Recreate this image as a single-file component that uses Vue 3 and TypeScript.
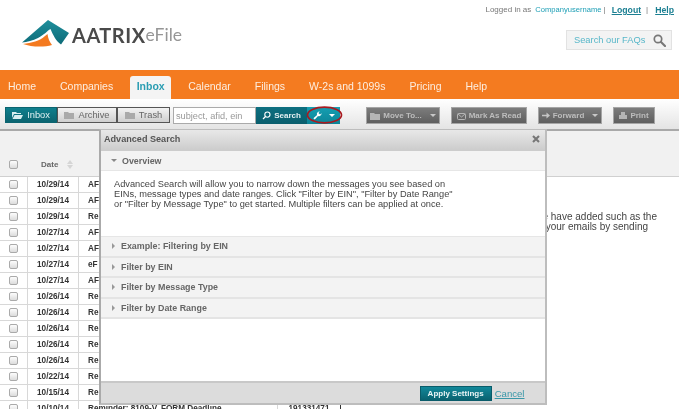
<script setup lang="ts">
const navItems: string[] = ['Home', 'Companies', 'Inbox', 'Calendar', 'Filings', 'W-2s and 1099s', 'Pricing', 'Help']
interface Row { date: string; subject: string; ein: string }
const rows: Row[] = [
  ['10/29/14', 'AF'], ['10/29/14', 'AF'], ['10/29/14', 'Re'], ['10/27/14', 'AF'], ['10/27/14', 'AF'],
  ['10/27/14', 'eF'], ['10/27/14', 'AF'], ['10/26/14', 'Re'], ['10/26/14', 'Re'],
  ['10/26/14', 'Re'], ['10/26/14', 'Re'], ['10/26/14', 'Re'], ['10/22/14', 'Re'], ['10/15/14', 'Re'],
].map(([date, subject]) => ({ date, subject, ein: '' }))
rows.push({ date: '10/10/14', subject: 'Reminder: 8109-V, FORM Deadline', ein: '191331471' })
const sections: string[] = ['Example: Filtering by EIN', 'Filter by EIN', 'Filter by Message Type', 'Filter by Date Range']
</script>

<template>
  <div class="page">
    <header class="top">
      <div class="logo">
        <svg width="50" height="30" viewBox="20 18 50 30">
          <defs>
            <linearGradient id="tealg" x1="0" y1="0" x2="0" y2="1">
              <stop offset="0" stop-color="#1f8f9c" />
              <stop offset="1" stop-color="#0d6b78" />
            </linearGradient>
          </defs>
          <path d="M22 42.5 L48 20 L69 33 L61 44.5 C56 41 53 35 50.5 29 C47 31 44 35 38 38 C33 40.5 27 42 22 42.5 Z" fill="url(#tealg)" />
          <path d="M23 44 C31 43 40 41 45 36 L47.5 34 C48 38 49.5 42 52 45 C44 47.5 31 47 23 44 Z" fill="#f47a20" />
        </svg>
        <span class="brand">AATRIX</span><span class="efile">eFile</span>
      </div>
      <div class="top-right">
        <div class="user">
          <span class="muted">Logged in as</span>
          <span class="uname">Companyusername</span>
          <span class="muted sep1">|</span>
          <a class="tlink">Logout</a>
          <span class="muted sep2">|</span>
          <a class="tlink">Help</a>
        </div>
        <div class="faq">
          <span>Search our FAQs</span>
          <svg width="13" height="13" viewBox="0 0 13 13"><circle cx="5" cy="5" r="3.7" fill="none" stroke="#777" stroke-width="1.7" /><path d="M8 8 L12 12" stroke="#777" stroke-width="2.2" stroke-linecap="round" /></svg>
        </div>
      </div>
    </header>

    <nav class="nav">
      <a v-for="n in navItems" :key="n" :class="['nav-item', { active: n === 'Inbox' }]">{{ n }}</a>
    </nav>

    <div class="toolbar">
      <div class="tabs">
        <button class="tab on">
          <svg width="11" height="8" viewBox="0 0 11 8"><path d="M0 1h4l1 1h4v1H2L0 7z M2.5 4H11L9 8H0.5z" fill="#d8eef0" /></svg>Inbox
        </button>
        <button class="tab">
          <svg width="10" height="8" viewBox="0 0 10 8"><path d="M0 1h4l1 1h5v6H0z" fill="#aaa" /></svg>Archive
        </button>
        <button class="tab">
          <svg width="10" height="8" viewBox="0 0 10 8"><path d="M0 1h4l1 1h5v6H0z" fill="#aaa" /></svg>Trash
        </button>
      </div>
      <div class="search">
        <input class="sinput" placeholder="subject, afid, ein" />
        <button class="sbtn">
          <svg width="9" height="9" viewBox="0 0 9 9"><circle cx="5.4" cy="3.6" r="2.6" fill="none" stroke="#fff" stroke-width="1.1" /><path d="M3.5 5.5 L1 8" stroke="#fff" stroke-width="1.3" /></svg>Search
        </button>
        <button class="wbtn">
          <svg width="9" height="9" viewBox="0 0 9 9"><path d="M8.6 2.2 A2.6 2.6 0 0 1 5 4.9 L1.8 8.6 L0.4 7.2 L4.1 4 A2.6 2.6 0 0 1 6.8 0.4 L5.4 1.9 L7.1 3.6 Z" fill="#fff" /></svg>
          <i class="caret white"></i>
          <svg class="ring" width="37" height="20" viewBox="0 0 37 20"><ellipse cx="18.5" cy="10" rx="17" ry="7.8" fill="none" stroke="#a81a20" stroke-width="1.7" /></svg>
        </button>
      </div>
      <div class="actions">
        <button class="act w74">
          <svg width="10" height="8" viewBox="0 0 10 8"><path d="M0 1h4l1 1h5v6H0z" fill="#b5b5b5" /></svg>Move To...<i class="caret"></i>
        </button>
        <button class="act w76">
          <svg width="9" height="8" viewBox="0 0 9 8"><rect x=".5" y="1.5" width="8" height="6" rx="1" fill="none" stroke="#b5b5b5" /><path d="M1 2 L4.5 5 L8 2" fill="none" stroke="#b5b5b5" /></svg>Mark As Read
        </button>
        <button class="act w64">
          <svg width="8" height="7" viewBox="0 0 8 7"><path d="M0 2.7h4.5V.5L8 3.5 4.5 6.5V4.3H0z" fill="#c5c5c5" /></svg>Forward<i class="caret"></i>
        </button>
        <button class="act w42">
          <svg width="8" height="8" viewBox="0 0 8 8"><path d="M2 0h4v3H2z M0 3h8v4H0z" fill="#b5b5b5" /></svg>Print
        </button>
      </div>
    </div>

    <main class="content">
      <section class="list">
        <div class="list-head">
          <span class="c-check"><i class="box"></i></span>
          <span class="h-date">Date</span>
          <span class="sort"><i class="up"></i><i class="down"></i></span>
        </div>
        <div v-for="(r, i) in rows" :key="i" class="row">
          <span class="c-check"><i class="box"></i></span>
          <span class="c-date">{{ r.date }}</span>
          <span class="c-subj">{{ r.subject }}</span>
          <span class="c-ein">{{ r.ein }}</span>
        </div>
      </section>
      <section class="detail">
        <div class="detail-head"></div>
        <div class="detail-body">
          <p>We have added such as the</p>
          <p class="line2">about your emails by sending</p>
        </div>
      </section>
    </main>

    <div class="modal">
      <div class="m-title">
        <span>Advanced Search</span>
        <svg width="8" height="8" viewBox="0 0 8 8"><path d="M1 1 L7 7 M7 1 L1 7" stroke="#777" stroke-width="2.1" /></svg>
      </div>
      <div class="m-head"><i class="tri-down"></i>Overview</div>
      <div class="m-body">
        Advanced Search will allow you to narrow down the messages you see based on<br />
        EINs, message types and date ranges. Click "Filter by EIN", "Filter by Date Range"<br />
        or "Filter by Message Type" to get started. Multiple filters can be applied at once.
      </div>
      <div v-for="s in sections" :key="s" class="m-head closed"><i class="tri-right"></i>{{ s }}</div>
      <div class="m-space"></div>
      <div class="m-foot">
        <button class="apply">Apply Settings</button>
        <a class="cancel">Cancel</a>
      </div>
    </div>
  </div>
</template>

<style>
html, body { margin: 0; background: #fff; }
</style>

<style scoped>
.page {
  position: relative;
  width: 679px;
  height: 409px;
  overflow: hidden;
  background: #fff;
  font-family: "Liberation Sans", Arial, sans-serif;
  color: #444;
  filter: blur(0.35px);
}
button { font-family: inherit; padding: 0; cursor: pointer; }
.top { height: 70px; display: flex; justify-content: space-between; }
.logo { display: flex; align-items: flex-start; padding: 18px 0 0 20px; }
.brand { font: 700 20px/1 Lato, sans-serif; color: #4a4a4a; letter-spacing: 0.5px; margin: 7px 0 0 2px; }
.efile { font: 400 17.5px/20px Lato, sans-serif; color: #969696; margin: 7px 0 0 0; }
.top-right { display: flex; flex-direction: column; align-items: flex-end; padding: 5px 5px 0 0; }
.user { font-size: 8px; line-height: 10px; display: flex; align-items: center; }
.muted { color: #777; }
.uname { color: #1c9eb5; margin-left: 4px; font-size: 7.6px; font-weight: 400; }
.sep1 { margin-left: 2px; }
.sep2 { margin: 0 7px 0 5px; }
.tlink { color: #1b7f92; font-weight: 700; text-decoration: underline; font-size: 8.7px; margin-left: 6px; }
.sep2 + .tlink { margin-left: 0; }
.faq {
  box-sizing: border-box;
  width: 106px; height: 20px; margin: 15px 2px 0 0;
  background: #f3f3f3; border: 1px solid #e2e2e2;
  display: flex; align-items: center; justify-content: space-between;
  padding: 0 5px 0 7px;
  color: #57b7c9; font-size: 9.3px;
}
.nav { height: 29px; background: #f47b20; display: flex; align-items: flex-end; }
.nav-item {
  height: 23px; line-height: 20px; padding: 0 12px;
  color: #fdeee0; font-size: 10.5px; border-radius: 3px 3px 0 0;
}
.nav-item:first-child { padding-left: 8px; }
.nav-item.active { background: #f4f4f4; color: #2a9db2; font-weight: 700; margin: 0 5px; padding: 0; width: 41px; box-sizing: border-box; text-align: center; }
.toolbar {
  box-sizing: border-box;
  height: 30px; padding: 8px 0 0 5px;
  display: flex; align-items: flex-start;
  background: linear-gradient(#ffffff, #e4e4e4);
}
.tabs { display: flex; }
.tab {
  box-sizing: border-box; height: 16px;
  display: flex; align-items: center; justify-content: center; gap: 4px;
  border: 1px solid #555; background: linear-gradient(#f2f2f2, #cfcfcf);
  color: #666; font-size: 9.3px; width: 60px;
}
.tab.on { width: 52px; background: linear-gradient(#0f7f8d, #0b6470); color: #dff1f3; border-color: #0b6470; }
.tab:nth-child(3) { width: 53px; }
.search { display: flex; margin-left: 3px; }
.sinput {
  box-sizing: border-box; width: 83px; height: 17px; padding: 0 2px;
  border: 1px solid #aaa; background: #fff; font: 9.2px "Liberation Sans", sans-serif; outline: none;
}
.sinput::placeholder { color: #999; opacity: 1; }
.sbtn {
  box-sizing: border-box; width: 51px; height: 17px; border: 0; background: linear-gradient(#0d6f80, #0a5e6d);
  color: #e3eff1; font: 700 8px "Liberation Sans", sans-serif;
  display: flex; align-items: center; justify-content: center; gap: 3px;
}
.wbtn {
  position: relative; box-sizing: border-box; width: 33px; height: 17px; border: 0;
  background: linear-gradient(#159fb2, #0c8497);
  display: flex; align-items: center; justify-content: center; gap: 7px;
}
.ring { position: absolute; left: -1px; top: -2px; }
.caret {
  display: inline-block; width: 0; height: 0;
  border-left: 3px solid transparent; border-right: 3px solid transparent; border-top: 3px solid #c8c8c8;
}
.caret.white { border-top-color: #fff; }
.actions { display: flex; gap: 11px; margin-left: 26px; }
.act {
  box-sizing: border-box; height: 17px; border: 1px solid #a5a5a5;
  background: linear-gradient(#7c7c7c, #5f5f5f); color: #bdbdbd;
  font: 700 8px "Liberation Sans", sans-serif;
  display: flex; align-items: center; justify-content: center; gap: 3px; white-space: nowrap;
}
.act .caret { margin-left: 5px; }
.w74 { width: 74px; } .w76 { width: 76px; } .w64 { width: 64px; } .w42 { width: 42px; }
.content { display: flex; height: 280px; }
.list { width: 341px; border-top: 2px solid #a9a9a9; overflow: hidden; }
.list-head {
  box-sizing: border-box; height: 46px; background: #f1f1f1; border-bottom: 1px solid #d0d0d0;
  display: flex; align-items: flex-end; padding-bottom: 7px; font-size: 8px; font-weight: 700; color: #666;
}
.h-date { margin-left: 14px; line-height: 9px; }
.c-check { width: 27px; display: flex; justify-content: center; flex: none; }
.box {
  display: block; box-sizing: border-box; width: 9px; height: 9px; border: 1px solid #aaa; border-radius: 2px;
  background: linear-gradient(#fdfdfd, #dcdcdc);
}
.sort { display: flex; flex-direction: column; gap: 1px; margin-left: 9px; }
.up { border-left: 3px solid transparent; border-right: 3px solid transparent; border-bottom: 4px solid #d5d5d5; }
.down { border-left: 3px solid transparent; border-right: 3px solid transparent; border-top: 4px solid #d5d5d5; }
.row {
  box-sizing: border-box; height: 16px; display: flex; align-items: center;
  border-bottom: 1px solid #d8d8d8; font-size: 8.2px; font-weight: 700; color: #333; background: #fff;
}
.c-date { box-sizing: border-box; width: 51px; text-align: center; border-left: 1px solid #d8d8d8; line-height: 15px; flex: none; }
.c-subj { box-sizing: border-box; width: 199px; padding-left: 9px; border-left: 1px solid #d8d8d8; line-height: 15px; flex: none; white-space: nowrap; overflow: hidden; }
.c-ein { flex: 1; text-align: center; border-left: 1px solid #d8d8d8; border-right: 1px solid #333; line-height: 15px; }
.detail { flex: 1; border-top: 2px solid #a9a9a9; }
.detail-head { height: 45px; background: #f1f1f1; border-bottom: 1px solid #d0d0d0; }
.detail-body { padding: 35px 22px 0 0; font-size: 10px; line-height: 10px; color: #444; white-space: nowrap; text-align: right; }
.detail-body p { margin: 0; }
.detail-body .line2 { padding-right: 9px; }
.modal {
  position: absolute; left: 99px; top: 129px;
  box-sizing: border-box; width: 447.5px; height: 276px;
  background: #fff; border: 2px solid #bdbdbd; border-top-width: 1px; border-left-color: #aaa;
  display: flex; flex-direction: column;
}
.m-title {
  box-sizing: border-box; height: 21px; flex: none; padding: 0 5px 4px 3px;
  background: linear-gradient(#e8e8e8, #cbcbcb);
  display: flex; align-items: center; justify-content: space-between;
  font: 700 9.1px "Liberation Sans", sans-serif; color: #555;
}
.m-head {
  box-sizing: border-box; height: 20px; flex: none; display: flex; align-items: center;
  background: #f3f3f3; border-bottom: 1px solid #e6e6e6; padding-left: 10px;
  font: 700 8.9px "Liberation Sans", sans-serif; color: #666;
}
.m-head.closed { height: 20.5px; border-bottom: 2px solid #e4e4e4; }
.tri-down { width: 0; height: 0; border-left: 3px solid transparent; border-right: 3px solid transparent; border-top: 3px solid #888; margin-right: 5px; }
.tri-right { width: 0; height: 0; border-top: 3px solid transparent; border-bottom: 3px solid transparent; border-left: 3px solid #999; margin-right: 6px; margin-left: 1px; }
.m-body {
  box-sizing: border-box; height: 66px; flex: none; padding: 8px 0 0 13px;
  font-size: 9.25px; line-height: 10px; color: #444; border-bottom: 1px solid #e6e6e6; white-space: nowrap;
}
.m-space { flex: 1; }
.m-foot {
  box-sizing: border-box; height: 22px; flex: none; background: #dcdcdc; border-top: 2px solid #c8c8c8;
  display: flex; align-items: center; justify-content: flex-end; padding-right: 20px; gap: 3px;
}
.apply {
  box-sizing: border-box; width: 72px; height: 15px; border: 1px solid #0a5c6a; background: linear-gradient(#12889a, #0a6270);
  color: #eaf4f5; font: 700 8px "Liberation Sans", sans-serif;
}
.cancel { color: #3a97a8; text-decoration: underline; font-size: 9.6px; }
</style>
